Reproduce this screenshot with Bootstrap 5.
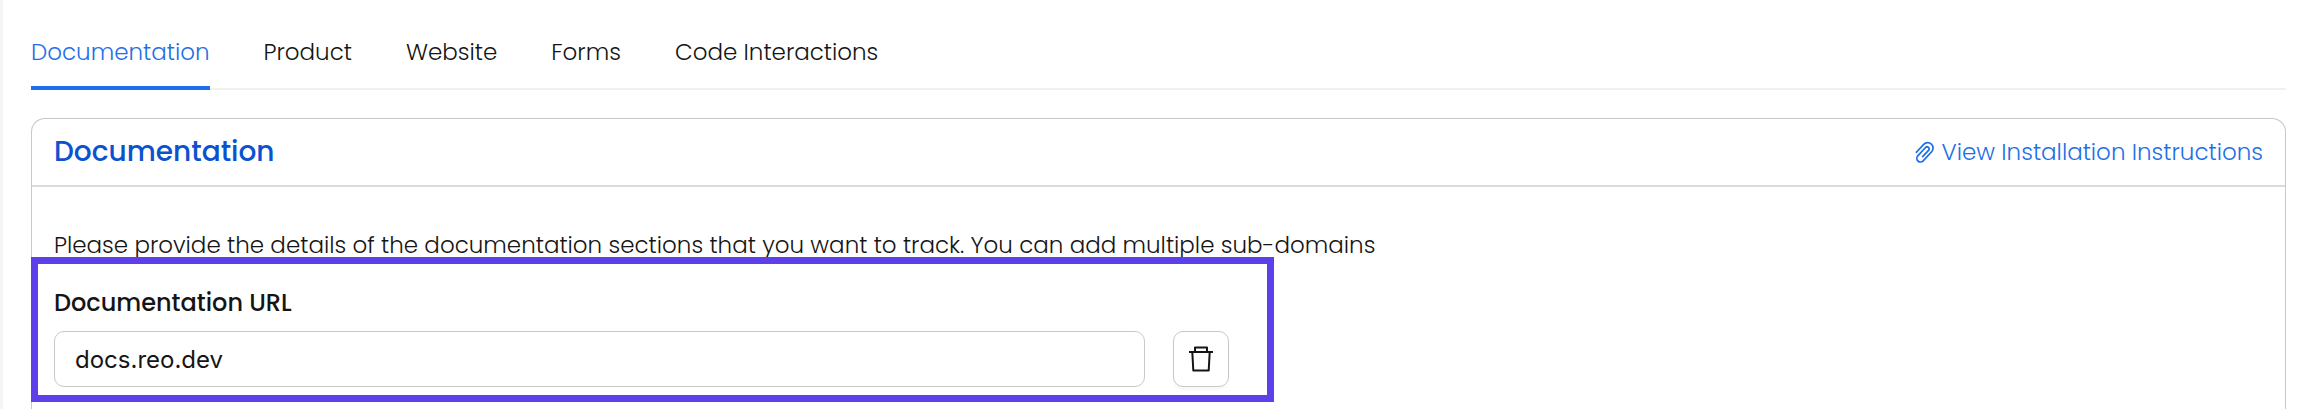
<!DOCTYPE html>
<html lang="en">
<head>
<meta charset="utf-8">
<meta name="viewport" content="width=device-width, initial-scale=1">
<title>Documentation tracking</title>
<link rel="stylesheet" href="https://cdn.jsdelivr.net/npm/bootstrap@5.3.0/dist/css/bootstrap.min.css">
<style>
  body { font-family: Poppins, Inter, sans-serif; font-size: 23px; line-height: 36px; font-weight: 300; color: #151515; background: #fff; }
  .page-shell { border-left: 3px solid #f5f5f5; padding: 32px 18px 0 28px; }
  .section-tabs { gap: 54px; border-bottom: 2px solid #f0f0f0; margin-bottom: 28px; }
  .section-tabs .nav-link { padding: 2px 0 16px; margin-bottom: -2px; color: #151515; border-bottom: 4px solid transparent; }
  .section-tabs .nav-link.active { color: #1f6fe8; border-color: #1f6fe8; }
  .panel { border: 1px solid #c8c8c8; border-bottom: 0; border-radius: 14px 14px 0 0; --bs-card-bg: transparent; }
  .panel .card-header { background: none; padding: 15px 22px; border-bottom: 2px solid #dadada; }
  .panel h1 { font-size: 28px; line-height: 36px; font-weight: 500; color: #0b53ce; }
  .guide-link { color: #1f6fe8; gap: 8px; }
  .panel .card-body { padding: 40px 22px 0; }
  .intro { margin-bottom: 22px; }
  .url-field { position: relative; width: calc(50% + 70px); }
  .url-field::after { content: ""; position: absolute; inset: -28px -45px -15px -23px; border: 7px solid #5d40ea; pointer-events: none; }
  .url-field label { font-size: 24px; font-weight: 500; margin-bottom: 10px; }
  .url-row { gap: 28px; }
  .url-row .form-control { height: 56px; border: 1px solid #c8c8c8; border-radius: 10px; padding: 0 20px; font-family: Inter, sans-serif; font-size: 24px; font-weight: 400; color: #151515; }
  .delete-btn { width: 56px; height: 56px; border: 1px solid #c8c8c8; border-radius: 10px; box-shadow: 0 3px 2px #f8f8f8; color: #151515; }
</style>
</head>
<body>
<main class="page-shell min-vh-100 d-flex flex-column">
  <nav class="nav section-tabs" aria-label="Sources">
    <a class="nav-link active" aria-current="page" href="#documentation">Documentation</a>
    <a class="nav-link" href="#product">Product</a>
    <a class="nav-link" href="#website">Website</a>
    <a class="nav-link" href="#forms">Forms</a>
    <a class="nav-link" href="#code">Code Interactions</a>
  </nav>
  <section class="card panel flex-grow-1" id="documentation">
    <div class="card-header d-flex justify-content-between align-items-center">
      <h1 class="mb-0">Documentation</h1>
      <a class="guide-link d-flex align-items-center text-decoration-none" href="#instructions">
        <svg width="20" height="22" viewBox="0 0 20 22" fill="none" stroke="currentColor" stroke-width="1.6" stroke-linecap="round" aria-hidden="true"><path transform="translate(10 11) rotate(-47) scale(1.08)" d="M-5-5H5A5 5 0 0 1 5 5H-6.500A3.400 3.400 0 0 1-6.500-1.800H4A1.900 1.900 0 0 1 4 2H-4"/></svg>
        View Installation Instructions
      </a>
    </div>
    <div class="card-body">
      <p class="intro">Please provide the details of the documentation sections that you want to track. You can add multiple sub-domains</p>
      <div class="url-field">
        <label class="d-block" for="doc-url">Documentation URL</label>
        <div class="url-row d-flex">
          <input class="form-control" id="doc-url" type="text" value="docs.reo.dev">
          <button class="btn delete-btn p-0 flex-shrink-0 d-flex align-items-center justify-content-center" type="button" aria-label="Delete URL">
            <svg width="24" height="26" viewBox="0 0 24 26" fill="none" stroke="currentColor" stroke-width="2" stroke-linejoin="round" aria-hidden="true"><path d="M0 6H24M6 6V1.500H18V6M3.300 6 4.300 24.500H19.700L20.700 6"/></svg>
          </button>
        </div>
      </div>
    </div>
  </section>
</main>
<script src="https://cdn.jsdelivr.net/npm/bootstrap@5.3.0/dist/js/bootstrap.bundle.min.js"></script>
</body>
</html>
